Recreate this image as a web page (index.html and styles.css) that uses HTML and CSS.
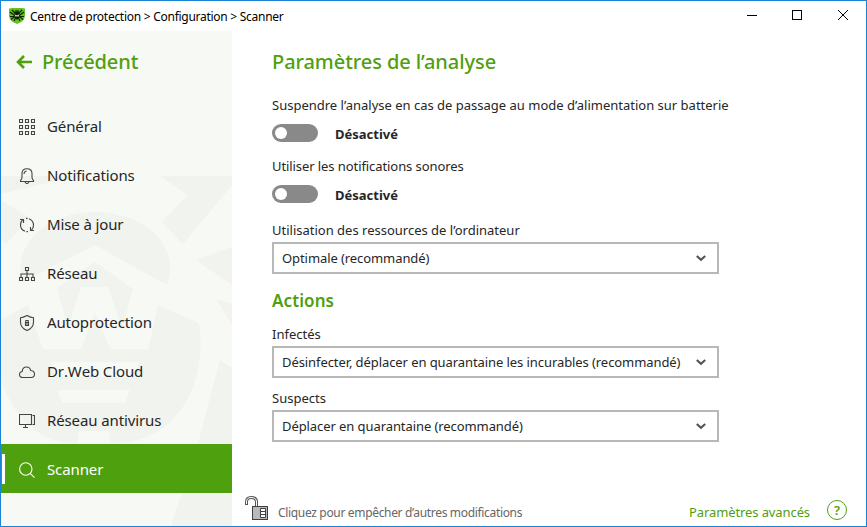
FILE: index.html
```html
<!DOCTYPE html>
<html lang="fr">
  <head>
    <meta charset="UTF-8" />
    <title>Centre de protection</title>
    <link rel="stylesheet" href="styles.css">
  </head>
  <body>
    <div class="window">
      <header class="titlebar">
        <svg class="logo" width="16" height="16" viewBox="0 0 16 16">
          <path d="M0 .5 Q8 -1 16 .5 V8 Q15.5 13.5 8 16 Q.5 13.5 0 8 Z" fill="#62c51b" />
          <path d="M3 2 L6 5 M13 2 L10 5 M1 4 L5 7 M15 4 L11 7 M1 8.5 H5 M15 8.5 H11 M2 11.5 L5 9 M14 11.5 L11 9 M5 13 L6 11 M11 13 L10 11 M7 2 V4 M9 2 V4" stroke="#102008" stroke-width="1.2" />
          <ellipse cx="8" cy="7.5" rx="3" ry="4" fill="#102008" />
          <path d="M6 6.5 L7 8.5 L8 7 L9 8.5 L10 6.5" fill="none" stroke="#b7e59a" />
        </svg>
        <span class="crumbs">Centre de protection &gt; Configuration &gt; Scanner</span>
        <div class="controls">
          <svg width="100" height="12" viewBox="0 0 100 12" fill="none" stroke="#000">
            <path d="M0 5.5 H10" />
            <rect x="45.5" y="0.5" width="9" height="9" />
            <path d="M91 0 L101 10 M101 0 L91 10" />
          </svg>
        </div>
      </header>

      <div class="main">
        <nav class="sidebar">
          <svg class="spider" width="231" height="495" viewBox="1 31 231 495">
            <g fill="#f1f3ee">
              <path d="M1 176 H78 L1 194 Z" />
              <path d="M1 200 L30 218 L6 244 L1 238 Z" />
              <path d="M160 176 H232 V185 L183 244 L162 222 L188 195 Z" />
              <path d="M22 282 C12 240 52 212 95 212 C142 212 182 244 167 285 L95 245 Z" />
              <path d="M1 320 L28 305 L43 349 H148 L158 305 L199 323 C208 380 180 444 110 444 H80 C40 444 15 420 1 380 Z" />
              <path d="M95 262 L133 289 L118 349 H72 L57 288 Z" />
              <path d="M196 260 L232 247 V285 Z" />
              <path d="M216 299 L232 303 V325 Z" />
              <path d="M220 360 L232 368 V526 H171 L198 444 L212 390 Z" />
            </g>
            <g fill="#f7f9f5">
              <path d="M28 305 L57 288 L68 328 L81 287 H108 L122 328 L133 289 L158 305 L148 349 H110 L95 313 L81 349 H43 Z" />
              <path d="M51 362 H139 L135 377 H55 Z M57 390 H130 L125 403 H62 Z M79 431 H109 L111 444 H77 Z" />
            </g>
          </svg>
          <a class="back" href="#">
            <svg width="16" height="14" viewBox="0 0 16 14" fill="none" stroke="#4fa00f" stroke-width="2.6"><path d="M8 1 L2 7 L8 13 M2 7 H16" /></svg>
            <span>Précédent</span>
          </a>
          <ul class="menu">
            <li>
              <svg class="icon" viewBox="0 0 16 16"><path d="M.5 .5h3v3h-3z M6.5 .5h3v3h-3z M12.5 .5h3v3h-3z M.5 6.5h3v3h-3z M6.5 6.5h3v3h-3z M12.5 6.5h3v3h-3z M.5 12.5h3v3h-3z M6.5 12.5h3v3h-3z M12.5 12.5h3v3h-3z" /></svg>
              <span>Général</span>
            </li>
            <li>
              <svg class="icon" viewBox="0 0 16 16"><path d="M1.5 12.5 Q3 11.5 3 9 V5.5 Q3 .8 8 .8 T13 5.5 V9 Q13 11.5 14.5 12.5 V13.5 H1.5 Z M6 14 Q8 17 10 14 M5 6 Q5 3.5 7.5 3" /></svg>
              <span>Notifications</span>
            </li>
            <li>
              <svg class="icon" viewBox="0 0 16 16"><path d="M1 2.5 H4.5 V6 M3.5 3 Q1.5 4.8 1.5 8 Q1.5 12.5 6 14.3 M7.5 14.6 H9 M15 13.5 H11.5 V10 M12.5 13 Q14.5 11.2 14.5 8 Q14.5 3.5 10 1.7 M7 1.4 H8.5" /></svg>
              <span>Mise à jour</span>
            </li>
            <li>
              <svg class="icon" viewBox="0 0 16 16"><path d="M6.5 1.5h3v3h-3z M.5 11.5h3v3h-3z M6.5 11.5h3v3h-3z M12.5 11.5h3v3h-3z M8 5 V11 M2 11 V8 H14 V11" /></svg>
              <span>Réseau</span>
            </li>
            <li>
              <svg class="icon" viewBox="0 0 16 16"><path d="M8 .6 Q4 2.8 1.5 2.8 V7 Q1.5 13 8 15.4 Q14.5 13 14.5 7 V2.8 Q12 2.8 8 .6 Z M6.5 7.5 h3 v3 h-3 z M6.8 7.5 V5.5 H9.2 V7.5 M7 9 h2" /></svg>
              <span>Autoprotection</span>
            </li>
            <li>
              <svg class="icon" viewBox="0 0 16 16"><path d="M4 13.5 Q.5 13.5 .5 10.5 Q.5 7.7 3.2 7.5 Q3.5 3 7.5 3 Q10.8 3 11.8 6.5 Q15.5 7 15.5 10.2 Q15.5 13.5 12 13.5 Z" /></svg>
              <span>Dr.Web Cloud</span>
            </li>
            <li>
              <svg class="icon" viewBox="0 0 16 16"><path d="M.5 1.5 H12.5 V11.5 H.5 Z M6.5 11.5 V14 M4 14.5 H9 M13.5 2.5 H15.5 V11.5 H13.5" /></svg>
              <span>Réseau antivirus</span>
            </li>
            <li class="active">
              <svg class="icon" viewBox="0 0 16 16"><path d="M13 7 A6.2 6.2 0 1 1 .6 7 A6.2 6.2 0 1 1 13 7 M11.2 11.4 L15.5 15.6" /></svg>
              <span>Scanner</span>
            </li>
          </ul>
        </nav>

        <div class="content">
          <div class="settings">
            <h1>Paramètres de l’analyse</h1>
            <p class="label battery">Suspendre l’analyse en cas de passage au mode d’alimentation sur batterie</p>
            <div class="toggle-row"><span class="toggle"></span><b>Désactivé</b></div>
            <p class="label sounds">Utiliser les notifications sonores</p>
            <div class="toggle-row"><span class="toggle"></span><b>Désactivé</b></div>
            <p class="label resources">Utilisation des ressources de l’ordinateur</p>
            <div class="select">
              <span>Optimale (recommandé)</span>
              <svg class="chevron" viewBox="0 0 10 7"><path d="M.8 1 L5 4.8 L9.2 1" /></svg>
            </div>
            <h2>Actions</h2>
            <p class="label">Infectés</p>
            <div class="select">
              <span>Désinfecter, déplacer en quarantaine les incurables (recommandé)</span>
              <svg class="chevron" viewBox="0 0 10 7"><path d="M.8 1 L5 4.8 L9.2 1" /></svg>
            </div>
            <p class="label suspects">Suspects</p>
            <div class="select">
              <span>Déplacer en quarantaine (recommandé)</span>
              <svg class="chevron" viewBox="0 0 10 7"><path d="M.8 1 L5 4.8 L9.2 1" /></svg>
            </div>
          </div>

          <footer class="footer">
            <svg class="lock" width="24" height="25" viewBox="0 0 24 25" fill="none">
              <path d="M1.5 9 V6 Q1.5 1.5 6 1.5 Q11.5 1.5 11.5 6 V10" stroke="#555" stroke-width="3" />
              <path d="M1.5 8 V6 Q1.5 1.5 6 1.5 Q11.5 1.5 11.5 6 V10" stroke="#fff" />
              <rect x="7.5" y="10.5" width="15" height="13" fill="#b9b9b9" stroke="#404040" />
              <path d="M15.5 12.5 h5 v9 h-5 z M15.5 15.5 h5 M15.5 18.5 h5" fill="#fff" stroke="#404040" />
            </svg>
            <span class="hint">Cliquez pour empêcher d’autres modifications</span>
            <a class="advanced" href="#">Paramètres avancés</a>
            <span class="help">?</span>
          </footer>
        </div>
      </div>
    </div>
  </body>
</html>
```

FILE: styles.css
```css
* {
  box-sizing: border-box;
}

body {
  margin: 0;
  font-family: "Noto Sans", "Open Sans", sans-serif;
  font-size: 13px;
  color: #262626;
}

a {
  color: #4fa00f;
  text-decoration: none;
}

.window {
  width: 867px;
  height: 527px;
  border: 1px solid #1883d7;
  background-color: #fff;
  display: flex;
  flex-direction: column;
}

.titlebar {
  height: 30px;
  display: flex;
  align-items: center;
  padding-left: 8px;
  font-size: 12px;
  color: #000;
}

.crumbs {
  margin-left: 5px;
  letter-spacing: -0.27px;
}

.controls {
  margin-left: auto;
  margin-right: 19px;
  height: 12px;
}

.controls svg {
  display: block;
  overflow: visible;
}

.main {
  flex: 1;
  display: flex;
}

.sidebar {
  position: relative;
  width: 231px;
  background-color: #f7f9f5;
}

/* faded spider behind the menu */
.spider {
  position: absolute;
  left: 0;
  top: 0;
}

.back {
  position: relative;
  display: flex;
  align-items: center;
  gap: 10px;
  height: 62px;
  padding-left: 15px;
  font-size: 20px;
  font-weight: 550;
  letter-spacing: -0.1px;
}

.back span {
  padding-bottom: 2px;
}

.menu {
  position: relative;
  list-style: none;
  margin: 8px 0 0;
  padding: 0;
  font-size: 15px;
  font-kerning: none;
  letter-spacing: -0.12px;
}

.menu li {
  height: 49px;
  display: flex;
  align-items: center;
  gap: 12px;
  padding-left: 18px;
}

.menu .active {
  background-color: #4fa00f;
  color: #fff;
  padding-left: 1px;
}

.active::before {
  content: "";
  width: 3px;
  height: 30px;
  margin-right: 2px;
  background-color: #fff;
}

.icon {
  width: 16px;
  height: 16px;
  margin-top: 3px;
  fill: none;
  stroke: #454545;
  stroke-width: 1.1;
}

.active .icon {
  stroke: #fff;
}

.content {
  flex: 1;
  display: flex;
  flex-direction: column;
}

.settings {
  width: 487px;
  padding: 16px 0 0 40px;
}

h1 {
  margin: 0;
  font-size: 20px;
  font-weight: 550;
  letter-spacing: -0.07px;
  line-height: 30px;
  color: #4fa00f;
}

h2 {
  margin: 14px 0 10px;
  font-size: 17px;
  font-weight: 600;
  letter-spacing: 0.1px;
  line-height: 26px;
  color: #4fa00f;
}

.label {
  margin: 0;
  height: 22px;
  line-height: 20px;
  white-space: nowrap;
}

.battery {
  margin-top: 18px;
}

.toggle-row {
  display: flex;
  align-items: center;
  height: 20px;
  margin-top: 6px;
  gap: 17px;
}

.toggle-row b {
  padding-top: 1px;
}

.toggle {
  width: 46px;
  height: 18px;
  margin-bottom: 1px;
  padding: 3px;
  border-radius: 9px;
  background-color: #898989;
}

.toggle::before {
  content: "";
  display: block;
  width: 12px;
  height: 12px;
  border-radius: 50%;
  background-color: #fff;
}

.sounds {
  margin-top: 13px;
  letter-spacing: -0.08px;
}

.resources {
  margin-top: 16px;
}

.select {
  width: 447px;
  height: 32px;
  display: flex;
  align-items: center;
  justify-content: space-between;
  padding: 0 11px 0 8px;
  border: 2px solid #b8b8b8;
  letter-spacing: -0.08px;
  white-space: nowrap;
}

.chevron {
  width: 10px;
  height: 7px;
  fill: none;
  stroke: #555;
  stroke-width: 2.2;
}

.suspects {
  margin-top: 10px;
}

.footer {
  display: flex;
  align-items: center;
  margin-top: auto;
  height: 32px;
  padding: 0 19px 0 13px;
}

.lock {
  margin-bottom: 4px;
}

.hint {
  margin: 4px 0 0 9px;
  font-size: 12px;
  letter-spacing: -0.33px;
  color: #666;
}

.advanced {
  margin: 4px 17px 0 auto;
  letter-spacing: -0.1px;
}

.help {
  width: 20px;
  height: 20px;
  border: 1px solid #4fa00f;
  border-radius: 50%;
  line-height: 18px;
  text-align: center;
  font-weight: 600;
  color: #4fa00f;
}
```
